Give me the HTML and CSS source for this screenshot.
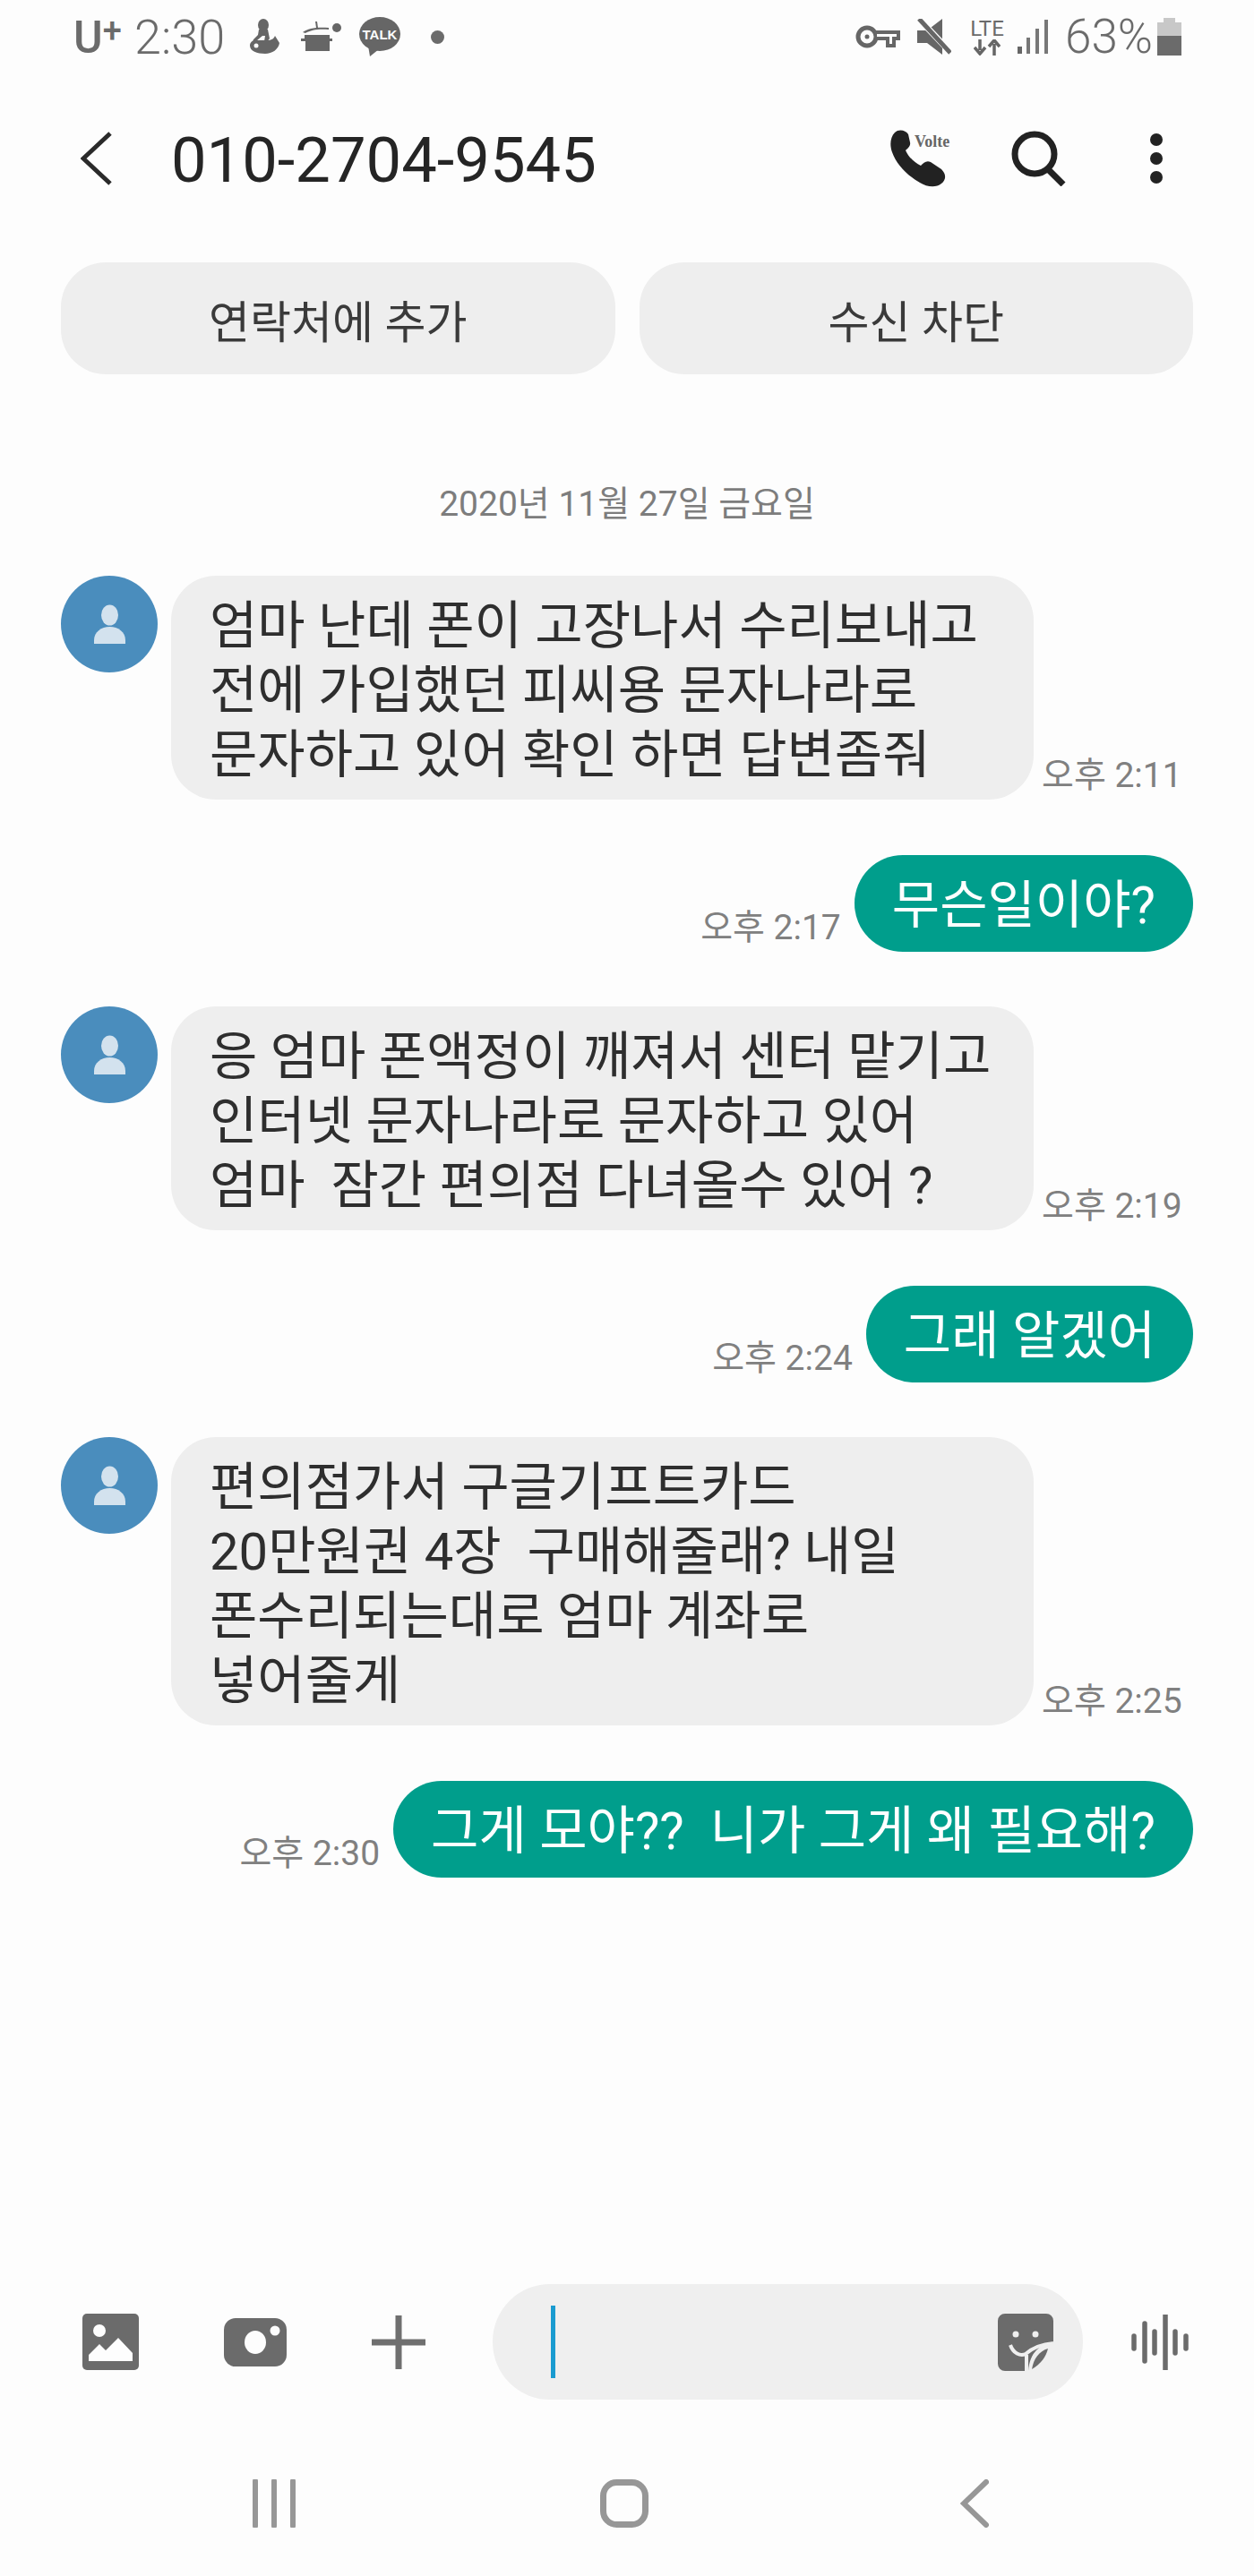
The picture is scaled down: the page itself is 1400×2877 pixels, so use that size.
FILE: index.html
```html
<!DOCTYPE html>
<html lang="ko">
<head>
    <meta charset="UTF-8">
    <title>010-2704-9545</title>
    <meta name="viewport" content="width=device-width, initial-scale=1.0">
    <link rel="stylesheet" href="styles.css">
</head>
<body>

<div class="page">

    <!-- Status bar -->
    <div class="status">
        <span class="carrier">U<span class="carrier-plus">+</span></span>
        <span class="clock">2:30</span>
        <svg class="st-bear" width="38" height="40" viewBox="0 0 38 40">
            <ellipse cx="18" cy="7" rx="6" ry="7" fill="#666"/>
            <path d="M13 12h10l2 10 -3 4 -3 -1 1 -6h-3l-6 5 -6 4 2 -5 5 -5z" fill="#666"/>
            <path d="M3 30c0-5 5-7 9-6l10 0c5 0 8-2 9-5l5 8c-1 7-8 12-16 12-9 0-17-3-17-9z" fill="#666"/>
            <circle cx="10" cy="30" r="2.5" fill="#fdfdfd"/>
        </svg>
        <svg class="st-pot" width="48" height="34" viewBox="0 0 48 34">
            <path d="M3 12C9 7 20 6 32 7l0 2C22 8 12 9 6 13z" fill="#666"/>
            <path d="M17 0l2 0 1 7h-2z" fill="#666"/>
            <circle cx="41" cy="7" r="5" fill="#666"/>
            <path d="M5 15h28v4h3v3h-3v11H6V22H1v-3h4z" fill="#666"/>
        </svg>
        <svg class="st-talk" width="46" height="44" viewBox="0 0 46 44">
            <ellipse cx="23" cy="19" rx="23" ry="19" fill="#666"/>
            <path d="M10 32l2 12 10-8z" fill="#666"/>
            <text x="23" y="25" text-anchor="middle" class="talk-label">TALK</text>
        </svg>
        <span class="st-dot"></span>

        <svg class="st-key" width="50" height="26" viewBox="0 0 50 26">
            <circle cx="13" cy="13" r="10" fill="none" stroke="#666" stroke-width="5"/>
            <circle cx="13" cy="13" r="2.5" fill="#666"/>
            <path d="M22 6h28v11h-5v8H34v-8H22z" fill="#666"/>
            <path d="M24 10h22v3h-5v8h-3v-8H24z" fill="#fdfdfd"/>
        </svg>
        <svg class="st-mute" width="38" height="40" viewBox="0 0 38 40">
            <path d="M0 13h11L28 0v40L11 27H0z" fill="#666"/>
            <path d="M-1 -3L37 37" stroke="#fdfdfd" stroke-width="7"/>
            <path d="M2 0L37 38" stroke="#666" stroke-width="5"/>
        </svg>
        <span class="st-lte">
            <span class="lte-label">LTE</span>
            <svg width="30" height="18" viewBox="0 0 30 18">
                <path d="M7 0v12M1 9l6 7 6-7" fill="none" stroke="#666" stroke-width="3.5"/>
                <path d="M23 18V5M17 8l6-7 6 7" fill="none" stroke="#666" stroke-width="3.5"/>
            </svg>
        </span>
        <svg class="st-signal" width="36" height="38" viewBox="0 0 36 38">
            <rect x="1" y="30" width="5" height="8" fill="#666"/>
            <rect x="11" y="20" width="4" height="18" fill="#777"/>
            <rect x="21" y="10" width="4" height="28" fill="#777"/>
            <rect x="31" y="0" width="4" height="38" fill="#777"/>
        </svg>
        <span class="battery-text">63%</span>
        <span class="battery"><span class="battery-level"></span></span>
    </div>

    <!-- Top app bar -->
    <div class="appbar">
        <svg class="bar-back" width="36" height="60" viewBox="0 0 36 60">
            <polyline points="33,2 3,30 33,58" fill="none" stroke="#2a2a2a" stroke-width="5"/>
        </svg>
        <div class="bar-title">010-2704-9545</div>
        <div class="bar-call">
            <svg width="64" height="64" viewBox="0 0 64 64">
                <path d="M6 3C10-1 18 0 21 5L23 14C24 18 20 21 18 23C21 30 28 37 35 40C38 37 41 34 46 36L58 44C64 50 63 56 58 60C52 65 42 64 34 59C20 51 8 39 3 25C0 17 1 8 6 3Z" fill="#222"/>
            </svg>
            <span class="call-badge">Volte</span>
        </div>
        <svg class="bar-search" width="62" height="62" viewBox="0 0 62 62">
            <circle cx="27" cy="26" r="22" fill="none" stroke="#222" stroke-width="7"/>
            <path d="M42 43L59 60" stroke="#222" stroke-width="7"/>
        </svg>
        <svg class="bar-more" width="16" height="58" viewBox="0 0 16 58">
            <circle cx="8" cy="8" r="7" fill="#222"/>
            <circle cx="8" cy="29" r="7" fill="#222"/>
            <circle cx="8" cy="50" r="7" fill="#222"/>
        </svg>
    </div>

    <!-- Unknown number actions -->
    <div class="actions">
        <div class="action-btn">연락처에 추가</div>
        <div class="action-btn">수신 차단</div>
    </div>

    <div class="date-line">2020년 11월 27일 금요일</div>

    <!-- Conversation -->
    <div class="thread">
        <div class="msg-in">
            <div class="avatar">
                <svg width="108" height="108" viewBox="0 0 108 108">
                    <ellipse cx="54.5" cy="44" rx="9.5" ry="11.5" fill="#d3e2ee"/>
                    <path d="M37 76V72C37 63 45 57 54.5 57S72 63 72 72V76Z" fill="#d3e2ee"/>
                </svg>
            </div>
            <div class="bubble bubble-in">엄마 난데 폰이 고장나서 수리보내고<br>전에 가입했던 피씨용 문자나라로<br>문자하고 있어 확인 하면 답변좀줘</div>
            <div class="time">오후 2:11</div>
        </div>

        <div class="msg-out">
            <div class="time">오후 2:17</div>
            <div class="bubble bubble-out">무슨일이야?</div>
        </div>

        <div class="msg-in">
            <div class="avatar">
                <svg width="108" height="108" viewBox="0 0 108 108">
                    <ellipse cx="54.5" cy="44" rx="9.5" ry="11.5" fill="#d3e2ee"/>
                    <path d="M37 76V72C37 63 45 57 54.5 57S72 63 72 72V76Z" fill="#d3e2ee"/>
                </svg>
            </div>
            <div class="bubble bubble-in">응 엄마 폰액정이 깨져서 센터 맡기고<br>인터넷 문자나라로 문자하고 있어<br>엄마  잠간 편의점 다녀올수 있어 ?</div>
            <div class="time">오후 2:19</div>
        </div>

        <div class="msg-out">
            <div class="time">오후 2:24</div>
            <div class="bubble bubble-out">그래 알겠어</div>
        </div>

        <div class="msg-in">
            <div class="avatar">
                <svg width="108" height="108" viewBox="0 0 108 108">
                    <ellipse cx="54.5" cy="44" rx="9.5" ry="11.5" fill="#d3e2ee"/>
                    <path d="M37 76V72C37 63 45 57 54.5 57S72 63 72 72V76Z" fill="#d3e2ee"/>
                </svg>
            </div>
            <div class="bubble bubble-in">편의점가서 구글기프트카드<br>20만원권 4장  구매해줄래? 내일<br>폰수리되는대로 엄마 계좌로<br>넣어줄게</div>
            <div class="time">오후 2:25</div>
        </div>

        <div class="msg-out">
            <div class="time">오후 2:30</div>
            <div class="bubble bubble-out">그게 모야??  니가 그게 왜 필요해?</div>
        </div>
    </div>

    <!-- Message composer -->
    <div class="composer">
        <div class="attach">
            <svg width="63" height="63" viewBox="0 0 63 63">
                <rect width="63" height="63" rx="5" fill="#6b6b6b"/>
                <circle cx="19" cy="19" r="7" fill="#fdfdfd"/>
                <path d="M7 53V46L19 34 26 41 40 27 56 44V53Z" fill="#fdfdfd"/>
            </svg>
            <svg width="70" height="54" viewBox="0 0 70 54">
                <rect width="70" height="54" rx="13" fill="#6b6b6b"/>
                <ellipse cx="35" cy="27" rx="12" ry="13" fill="#fdfdfd"/>
                <circle cx="57" cy="14" r="5.5" fill="#fdfdfd"/>
            </svg>
            <svg width="60" height="60" viewBox="0 0 60 60">
                <path d="M30 0V60M0 30H60" stroke="#6f6f6f" stroke-width="7"/>
            </svg>
        </div>
        <div class="input-pill">
            <span class="caret"></span>
            <svg class="sticker" width="62" height="64" viewBox="0 0 62 64">
                <path d="M8 0H54A8 8 0 0 1 62 8V34C48 33 36 42 34 64H8A8 8 0 0 1 0 56V8A8 8 0 0 1 8 0Z" fill="#6b6b6b"/>
                <path d="M38 62C40 50 46 42 56 39C54 48 48 56 38 62Z" fill="#6b6b6b"/>
                <circle cx="20" cy="23" r="3.5" fill="#efefef"/>
                <circle cx="42" cy="23" r="3.5" fill="#efefef"/>
                <path d="M14 35C17 44 25 48 31 45C39 38 50 34 62 33" fill="none" stroke="#efefef" stroke-width="4"/>
                <path d="M32 46V64" stroke="#efefef" stroke-width="4"/>
            </svg>
        </div>
        <svg class="voice" width="64" height="62" viewBox="0 0 64 62">
            <path d="M3 24V38M15 10V52M26 19V43M38 0V62M49 19V43M61 24V38" stroke="#6b6b6b" stroke-width="5.5" stroke-linecap="round" fill="none"/>
        </svg>
    </div>

    <!-- Android navigation buttons -->
    <div class="navbar">
        <div class="nav-cell">
            <svg width="48" height="54" viewBox="0 0 48 54">
                <path d="M3 2V52M24 2V52M45 2V52" stroke="#979797" stroke-width="6" stroke-linecap="round"/>
            </svg>
        </div>
        <div class="nav-cell">
            <svg width="54" height="54" viewBox="0 0 54 54">
                <rect x="3.5" y="3.5" width="47" height="47" rx="15" fill="none" stroke="#979797" stroke-width="7"/>
            </svg>
        </div>
        <div class="nav-cell">
            <svg width="32" height="54" viewBox="0 0 32 54">
                <polyline points="29,3 4,27 29,51" fill="none" stroke="#979797" stroke-width="6" stroke-linecap="round"/>
            </svg>
        </div>
    </div>

</div>

</body>
</html>
```

FILE: styles.css
```css
html, body {
    margin: 0;
    padding: 0;
}
body {
    background-color: #fdfdfd;
    font-family: Roboto, "Noto Sans CJK KR", sans-serif;
    color: #2a2a2a;
}
.page {
    height: 2877px;
    display: flex;
    flex-direction: column;
    overflow: hidden;
}

/* status bar */
.status {
    height: 82px;
    display: flex;
    align-items: center;
    padding-left: 82px;
    color: #6b6b6b;
    flex: none;
}
.carrier {
    font-size: 50px;
    font-weight: 500;
    width: 68px;
    line-height: 1;
    white-space: nowrap;
}
.carrier-plus {
    font-size: 38px;
    vertical-align: 12px;
}
.clock {
    font-size: 54px;
    width: 104px;
    font-weight: 300;
}
.st-bear { margin-left: 22px; }
.st-pot { margin-left: 21px; }
.st-talk { margin-left: 18px; }
.st-dot {
    width: 15px;
    height: 15px;
    border-radius: 50%;
    background: #6b6b6b;
    margin-left: 34px;
}
.st-key { margin-left: 459px; }
.st-mute { margin-left: 19px; }
.st-lte {
    margin-left: 19px;
    width: 42px;
    display: flex;
    flex-direction: column;
    align-items: center;
}
.lte-label {
    font-size: 24px;
    line-height: 24px;
}
.st-signal { margin-left: 12px; }
.battery-text {
    font-size: 53px;
    font-weight: 300;
    margin-left: 18px;
    width: 103px;
    white-space: nowrap;
}
.battery {
    width: 27px;
    height: 37px;
    margin-top: 5px;
    background: #c8c8c8;
    position: relative;
    display: flex;
    align-items: flex-end;
}
.battery::before {
    content: "";
    position: absolute;
    top: -5px;
    left: 7px;
    width: 13px;
    height: 5px;
    background: #c8c8c8;
}
.battery-level {
    width: 100%;
    height: 22px;
    background: #6b6b6b;
}

/* app bar */
.appbar {
    height: 190px;
    display: flex;
    align-items: center;
    padding-left: 90px;
    flex: none;
}
.bar-title {
    font-size: 70.5px;
    color: #252525;
    margin-left: 65px;
    margin-top: 4px;
    width: 802px;
}
.bar-call {
    position: relative;
    width: 64px;
    height: 64px;
}
.call-badge {
    position: absolute;
    left: 28px;
    top: 3px;
    font-family: "Liberation Serif", serif;
    font-size: 18px;
    font-weight: bold;
    color: #666;
}
.bar-search { margin-left: 71px; }
.bar-more { margin-left: 93px; }

/* buttons under the bar */
.actions {
    display: flex;
    gap: 27px;
    padding: 0 68px;
    margin-top: 21px;
    flex: none;
}
.action-btn {
    flex: 1;
    height: 125px;
    border-radius: 50px;
    background: #eeeeee;
    color: #3a3a3a;
    font-size: 50px;
    display: flex;
    align-items: center;
    justify-content: center;
}

.date-line {
    margin-top: 121px;
    height: 48px;
    line-height: 48px;
    text-align: center;
    font-size: 39px;
    color: #7d7d7d;
    flex: none;
}

/* conversation */
.thread {
    flex: 1;
    display: flex;
    flex-direction: column;
    gap: 61.5px;
    padding: 56px 68px 0;
}
.msg-in {
    display: flex;
    align-items: flex-end;
}
.msg-out {
    display: flex;
    justify-content: flex-end;
    align-items: flex-end;
}
.avatar {
    width: 108px;
    height: 108px;
    border-radius: 50%;
    background: #4a8dbd;
    align-self: flex-start;
    flex: none;
    margin-right: 15px;
}
.avatar svg {
    display: block;
}
.bubble {
    font-size: 58px;
    line-height: 72px;
    padding: 20px 42px 16px;
    white-space: pre;
    border-radius: 50px;
}
.bubble-in {
    width: 963px;
    box-sizing: border-box;
    background: #eeeeee;
    color: #2e2e2e;
    padding: 20px 0 14px 43px;
}
.bubble-out {
    background: #009e8c;
    color: #ffffff;
    border-radius: 54px;
}
.time {
    font-size: 39px;
    line-height: 46px;
    color: #808080;
    margin-bottom: 4px;
    white-space: nowrap;
}
.msg-in .time {
    margin-left: 9px;
}
.msg-out .time {
    margin-right: 15px;
}

/* composer */
.composer {
    height: 129px;
    display: flex;
    align-items: center;
    padding-left: 92px;
    flex: none;
}
.attach {
    display: flex;
    align-items: center;
    gap: 95px;
}
.input-pill {
    width: 659px;
    height: 129px;
    margin-left: 75px;
    border-radius: 64px;
    background: #efefef;
    display: flex;
    align-items: center;
    justify-content: space-between;
    padding: 0 33px 0 65px;
    box-sizing: border-box;
}
.caret {
    width: 5px;
    height: 81px;
    background: #1a9bd0;
}
.voice { margin-left: 54px; }

/* navigation */
.navbar {
    height: 197px;
    display: grid;
    grid-template-columns: repeat(3, 391px);
    padding-left: 110px;
    flex: none;
}
.nav-cell {
    display: flex;
    justify-content: center;
    padding-top: 89px;
}
.talk-label {
    font-family: "Liberation Sans", sans-serif;
    font-size: 15px;
    font-weight: bold;
    fill: #fdfdfd;
}
```
